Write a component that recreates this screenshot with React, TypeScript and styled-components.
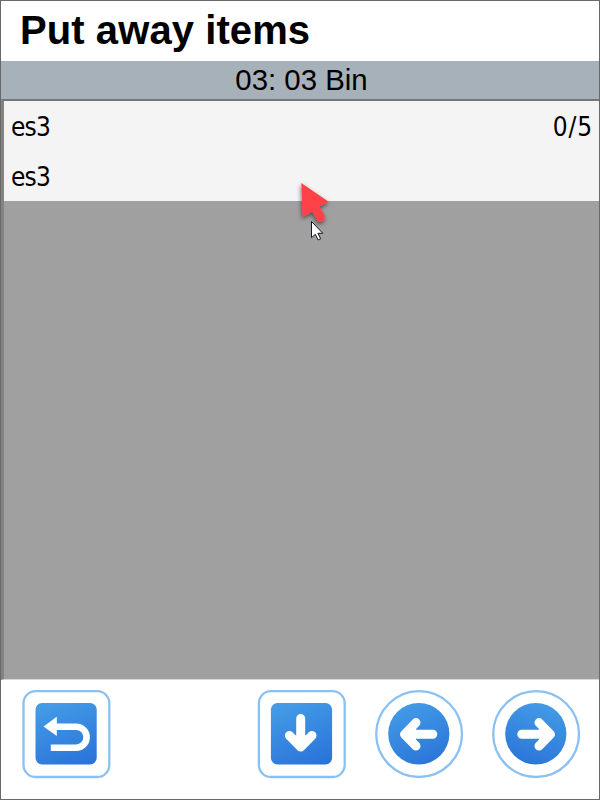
import React from "react";
import styled, { createGlobalStyle } from "styled-components";

const GlobalStyle = createGlobalStyle`
  * { box-sizing: border-box; }
  body { margin: 0; }
`;

const Screen = styled.main`
  position: relative;
  display: flex;
  flex-direction: column;
  width: 600px;
  height: 800px;
  border: 1px solid #696969;
  background: #fff;
  color: #000;
  overflow: hidden;
`;

const Title = styled.h1`
  flex: 0 0 60px;
  margin: 0;
  padding-left: 19px;
  font: bold 40px/58px "Liberation Sans", Arial, sans-serif;
  letter-spacing: 0.08px;
  white-space: nowrap;
`;

const BinBar = styled.div`
  flex: 0 0 38px;
  background: #a7b1b9;
  font: 29.4px/38px "Liberation Sans", Arial, sans-serif;
  text-align: center;
  padding-left: 3px;
`;

const List = styled.section`
  flex: 0 0 581px;
  border-top: 2px solid #777573;
  border-left: 3px solid #858381;
  border-bottom: 1px solid #d8d8d8;
  background: #a0a0a0;
`;

const Item = styled.div`
  display: grid;
  grid-template-columns: 1fr auto;
  grid-auto-rows: 50px;
  height: 100px;
  padding: 0 6px 0 7px;
  background: #f4f4f4;
  font: 26px/52px "DejaVu Sans Condensed", "DejaVu Sans", sans-serif;
  font-stretch: condensed;
`;

const Value = styled.span<{ $tracking: number }>`
  letter-spacing: ${(p) => p.$tracking}px;
`;

const Footer = styled.footer`
  flex: 1;
  display: flex;
  align-items: flex-start;
  gap: 29px;
  padding: 10px 0 0 21px;
`;

const Button = styled.button<{ $apart?: boolean }>`
  flex: 0 0 88px;
  height: 88px;
  margin: 0 ${(p) => (p.$apart ? 119 : 0)}px 0 0;
  padding: 0;
  border: 0;
  background: none;
`;

const Icon = styled.svg`
  display: block;
  width: 88px;
  height: 88px;
  overflow: visible;
`;

const Pointer = styled.svg`
  position: absolute;
  left: 289px;
  top: 174px;
  width: 60px;
  height: 80px;
  overflow: visible;
`;

type IconProps = { id: string; round?: boolean; flip?: boolean; shift?: number; children: React.ReactNode };

function ButtonIcon({ id, round, flip, shift = 0, children }: IconProps) {
  return (
    <Icon viewBox={`${-shift} 0 88 88`} aria-hidden="true">
      <defs>
        <linearGradient id={id} x1={flip ? "0.65" : "0.3"} y1="0" x2={flip ? "0.35" : "0.7"} y2="1">
          <stop offset="0" stopColor="#439be6" />
          <stop offset="1" stopColor="#2b75d9" />
        </linearGradient>
      </defs>
      <rect x="1.2" y="1.2" width="85.8" height="85.8" rx={round ? 42.9 : 12} fill="#fff" stroke="#8ac1f2" strokeWidth="2.3" />
      <rect x="13.2" y="13" width="61.2" height="61.5" rx={round ? 31 : 6.5} fill={`url(#${id})`} />
      {children}
    </Icon>
  );
}

const Arrow = ({ d }: { d: string }) => (
  <path d={d} fill="#fff" stroke="#fff" strokeWidth="9" strokeLinecap="round" strokeLinejoin="round" />
);

export default function App() {
  return (
    <>
      <GlobalStyle />
      <Screen>
        <Title>Put away items</Title>
        <BinBar>03: 03 Bin</BinBar>
        <List>
          <Item>
            <Value $tracking={-0.8}>es3</Value>
            <Value $tracking={0.9}>0/5</Value>
            <Value $tracking={-0.8}>es3</Value>
          </Item>
        </List>
        <Footer>
          <Button $apart aria-label="Back">
            <ButtonIcon id="back" shift={0.3}>
              <path d="M21.2 36.4 34.5 26.7V46Z" fill="#fff" />
              <path d="M33 36.7H53.8a10.5 10.5 0 0 1 0 21H28.5" fill="none" stroke="#fff" strokeWidth="6.6" />
            </ButtonIcon>
          </Button>
          <Button aria-label="Down">
            <ButtonIcon id="down" shift={-0.3}>
              <Arrow d="M43 28.5V52M31.7 45.5 43 57 54.3 45.5" />
            </ButtonIcon>
          </Button>
          <Button aria-label="Previous">
            <ButtonIcon id="prev" round>
              <Arrow d="M57.8 44.3H34M41 32.6 29.5 44.3 41 56" />
            </ButtonIcon>
          </Button>
          <Button aria-label="Next">
            <ButtonIcon id="next" round flip>
              <Arrow d="M29.8 44.3H54M47 32.6 58.5 44.3 47 56" />
            </ButtonIcon>
          </Button>
        </Footer>
        <Pointer viewBox="290 175 60 80" aria-hidden="true">
          <defs>
            <filter id="shade" x="-30%" y="-30%" width="180%" height="180%">
              <feDropShadow dx="-0.5" dy="2" stdDeviation="2" floodColor="#000" floodOpacity="0.55" />
            </filter>
          </defs>
          <path
            d="M301.3 183 328.7 201.8 319.4 206.5 324.5 215.5C326 219.5 322 223.5 317.8 221.3L312.3 211.7 302.5 217.3Z"
            fill="#ff4347"
            filter="url(#shade)"
          />
          <path
            d="M311.5 221.5V237.7L315.3 234.3 318.2 240 320.7 238.7 317.9 233.3H322.8Z"
            fill="#fff"
            stroke="#15152a"
            strokeWidth="1"
          />
        </Pointer>
      </Screen>
    </>
  );
}
